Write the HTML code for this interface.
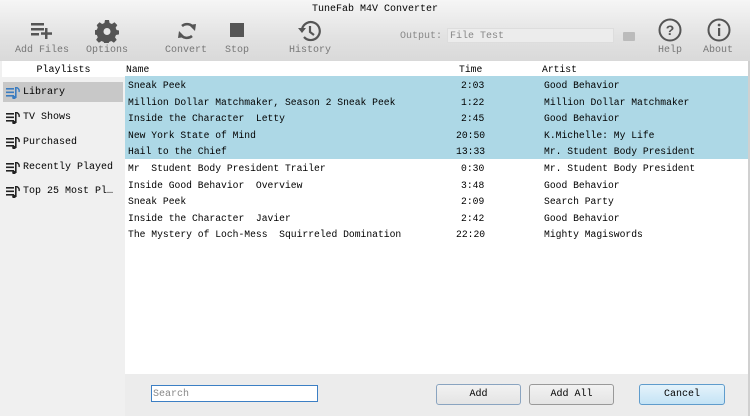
<!DOCTYPE html>
<html><head><style>
*{margin:0;padding:0;box-sizing:border-box}
body{width:750px;height:416px;overflow:hidden;background:#ececec;font-family:"Liberation Mono","Noto Sans CJK SC",monospace;font-size:10px;color:#000;position:relative}
.tb{position:absolute;left:0;top:0;width:750px;height:61px;background:linear-gradient(#f6f6f6,#e2e2e2 60%,#d9d9d9)}
.title{position:absolute;top:4px;left:0;width:750px;text-align:center;font-size:10px}
.btn{position:absolute;top:45px;font-size:10px;color:#777;text-align:center;width:60px}
.ico{position:absolute}
.side{position:absolute;left:0;top:61px;width:125px;height:355px;background:#f0f0f0}
.side .h{text-align:center;height:16px;line-height:19px;background:#fff;margin-left:2px}
.it{position:absolute;left:3px;width:120px;height:20px;line-height:21px;padding-left:20px}
.it svg{position:absolute;left:3px;top:5px}
.tab{position:absolute;left:125px;top:61px;width:623px;height:313px;background:#fff}
.r{position:absolute;left:0;width:623px;height:16.6px;line-height:19px;white-space:pre}
.r span{position:absolute}
.sel{background:#add8e6}
.b{position:absolute;top:384px;height:21px;border:1px solid #8aa4c0;border-radius:3px;background:linear-gradient(#f2f2f2,#e4e4e4);text-align:center;line-height:19px;font-size:10px}
</style></head><body>
<div class="tb">
<div class="title">TuneFab M4V Converter</div>
<svg class="ico" style="left:30px;top:20px" width="26" height="20"><g fill="#555"><rect x="1" y="3" width="13" height="2.5"/><rect x="1" y="8" width="13" height="2.5"/><rect x="1" y="13" width="8" height="2.5"/><rect x="15" y="8" width="2.5" height="11"/><rect x="11" y="12.3" width="11" height="2.5"/></g></svg>
<div class="btn" style="left:12px">Add Files</div>
<svg class="ico" style="left:95px;top:19px" width="24" height="24" viewBox="0 0 24 24"><path fill="#555" d="M10 1h4l.6 3 2.3 1 2.6-1.7 2.8 2.8L20.6 8.7l1 2.3 3 .6v.4h-.6v3.4l-3 .6-1 2.3 1.7 2.6-2.8 2.8-2.6-1.7-2.300 1-.6 3h-4l-.6-3-2.3-1-2.6 1.7-2.8-2.8 1.7-2.6-1-2.3-3-.6v-4l3-.6 1-2.3L1.7 6.1 4.5 3.3l2.6 1.7 2.3-1z"/><circle cx="12" cy="12.5" r="3.5" fill="#e6e6e6"/></svg>
<div class="btn" style="left:77px">Options</div>
<svg class="ico" style="left:176px;top:19px" width="22" height="24" viewBox="0 0 22 24"><path fill="none" stroke="#555" stroke-width="2.5" d="M6 7A8 8 0 0 1 18 9M16 17A8 8 0 0 1 4 15"/><path fill="#555" d="M13 6l7-1-1 7zM9 18l-7 1 1-7z"/></svg>
<div class="btn" style="left:156px">Convert</div>
<div class="ico" style="left:230px;top:23px;width:14px;height:14px;background:#555"></div>
<div class="btn" style="left:207px">Stop</div>
<svg class="ico" style="left:298px;top:19px" width="24" height="24" viewBox="0 0 24 24"><path fill="none" stroke="#555" stroke-width="2.2" d="M4 10A9 9 0 1 1 6 18M12 7v6l4 3"/><path fill="#555" d="M0 9h8l-4 5z"/></svg>
<div class="btn" style="left:280px">History</div>
<div style="position:absolute;left:400px;top:31px;color:#888">Output:</div>
<div style="position:absolute;left:447px;top:28px;width:167px;height:15px;background:#ececec;border:1px solid #ddd;color:#888;padding-left:2px;line-height:15px">File Test</div>
<div style="position:absolute;left:623px;top:32px;width:12px;height:9px;background:#bbb;border-radius:1px"></div>
<svg class="ico" style="left:658px;top:18px" width="24" height="24"><circle cx="12" cy="12" r="10.5" fill="none" stroke="#555" stroke-width="2"/><text x="12" y="17" font-size="14" font-family="Liberation Sans" font-weight="bold" text-anchor="middle" fill="#555">?</text></svg>
<div class="btn" style="left:640px">Help</div>
<svg class="ico" style="left:707px;top:18px" width="24" height="24"><circle cx="12" cy="12" r="10.5" fill="none" stroke="#555" stroke-width="2"/><rect x="11" y="10" width="2.2" height="8" fill="#555"/><circle cx="12.1" cy="7" r="1.4" fill="#555"/></svg>
<div class="btn" style="left:688px">About</div>
</div>
<div class="side"><div class="h">Playlists</div>
<div class="it" style="top:21px;background:#c8c8c8"><svg width="16" height="12"><g fill="#3a7cc0"><rect x="0" y="1" width="8" height="1.6"/><rect x="0" y="4.5" width="8" height="1.6"/><rect x="0" y="8" width="8" height="1.6"/><rect x="9" y="0" width="1.6" height="11"/><circle cx="8" cy="10.5" r="1.8"/><path d="M10 0q4 2 3 5" stroke="#3a7cc0" fill="none" stroke-width="1.4"/></g></svg>Library</div>
<div class="it" style="top:46px"><svg width="16" height="12"><g fill="#222"><rect x="0" y="1" width="8" height="1.6"/><rect x="0" y="4.5" width="8" height="1.6"/><rect x="0" y="8" width="8" height="1.6"/><rect x="9" y="0" width="1.6" height="11"/><circle cx="8" cy="10.5" r="1.8"/><path d="M10 0q4 2 3 5" stroke="#222" fill="none" stroke-width="1.4"/></g></svg>TV Shows</div>
<div class="it" style="top:71px"><svg width="16" height="12"><g fill="#222"><rect x="0" y="1" width="8" height="1.6"/><rect x="0" y="4.5" width="8" height="1.6"/><rect x="0" y="8" width="8" height="1.6"/><rect x="9" y="0" width="1.6" height="11"/><circle cx="8" cy="10.5" r="1.8"/><path d="M10 0q4 2 3 5" stroke="#222" fill="none" stroke-width="1.4"/></g></svg>Purchased</div>
<div class="it" style="top:96px"><svg width="16" height="12"><g fill="#222"><rect x="0" y="1" width="8" height="1.6"/><rect x="0" y="4.5" width="8" height="1.6"/><rect x="0" y="8" width="8" height="1.6"/><rect x="9" y="0" width="1.6" height="11"/><circle cx="8" cy="10.5" r="1.8"/><path d="M10 0q4 2 3 5" stroke="#222" fill="none" stroke-width="1.4"/></g></svg>Recently Played</div>
<div class="it" style="top:120px"><svg width="16" height="12"><g fill="#222"><rect x="0" y="1" width="8" height="1.6"/><rect x="0" y="4.5" width="8" height="1.6"/><rect x="0" y="8" width="8" height="1.6"/><rect x="9" y="0" width="1.6" height="11"/><circle cx="8" cy="10.5" r="1.8"/><path d="M10 0q4 2 3 5" stroke="#222" fill="none" stroke-width="1.4"/></g></svg>Top 25 Most Pl…</div>
</div>
<div class="tab" style="font-size:9.7px">
<div class="r" style="top:-1px"><span style="left:1px">Name</span><span style="left:334px">Time</span><span style="left:417px">Artist</span></div>
<div class="r sel" style="top:15px"><span style="left:3px">Sneak Peek</span><span style="left:336px">2:03</span><span style="left:419px">Good Behavior</span></div>
<div class="r sel" style="top:31.6px"><span style="left:3px">Million Dollar Matchmaker, Season 2 Sneak Peek</span><span style="left:336px">1:22</span><span style="left:419px">Million Dollar Matchmaker</span></div>
<div class="r sel" style="top:48.2px"><span style="left:3px">Inside the Character  Letty</span><span style="left:336px">2:45</span><span style="left:419px">Good Behavior</span></div>
<div class="r sel" style="top:64.8px"><span style="left:3px">New York State of Mind</span><span style="left:331px">20:50</span><span style="left:419px">K.Michelle: My Life</span></div>
<div class="r sel" style="top:81.4px"><span style="left:3px">Hail to the Chief</span><span style="left:331px">13:33</span><span style="left:419px">Mr. Student Body President</span></div>
<div class="r" style="top:98px"><span style="left:3px">Mr  Student Body President Trailer</span><span style="left:336px">0:30</span><span style="left:419px">Mr. Student Body President</span></div>
<div class="r" style="top:114.6px"><span style="left:3px">Inside Good Behavior  Overview</span><span style="left:336px">3:48</span><span style="left:419px">Good Behavior</span></div>
<div class="r" style="top:131.2px"><span style="left:3px">Sneak Peek</span><span style="left:336px">2:09</span><span style="left:419px">Search Party</span></div>
<div class="r" style="top:147.8px"><span style="left:3px">Inside the Character  Javier</span><span style="left:336px">2:42</span><span style="left:419px">Good Behavior</span></div>
<div class="r" style="top:164.4px"><span style="left:3px">The Mystery of Loch-Mess  Squirreled Domination</span><span style="left:331px">22:20</span><span style="left:419px">Mighty Magiswords</span></div>
</div>
<div style="position:absolute;left:748px;top:61px;width:2px;height:355px;background:#d0d0d0"></div>
<div style="position:absolute;left:151px;top:385px;width:167px;height:17px;background:#fff;border:1px solid #3c7fc4;color:#888;line-height:17px;padding-left:1px">Search</div>
<div class="b" style="left:436px;width:85px">Add</div>
<div class="b" style="left:529px;width:85px;border-color:#999">Add All</div>
<div class="b" style="left:639px;width:86px;background:linear-gradient(#e5f3fb,#c4e3f5);border-color:#5f9ccc">Cancel</div>
</body></html>
